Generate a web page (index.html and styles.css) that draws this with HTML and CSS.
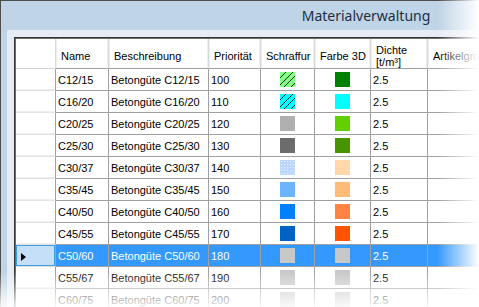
FILE: index.html
```html
<!DOCTYPE html>
<html lang="de">
<head>
    <meta charset="UTF-8">
    <title>Materialverwaltung</title>
    <link rel="stylesheet" href="styles.css">
</head>
<body>
    <div class="window">
        <div class="titlebar">Materialverwaltung</div>
        <div class="client">
            <div class="grid">
                <table>
                    <thead>
                        <tr>
                            <th class="corner"></th>
                            <th class="col-name">Name</th>
                            <th class="col-desc">Beschreibung</th>
                            <th class="col-prio">Priorität</th>
                            <th class="col-hatch">Schraffur</th>
                            <th class="col-color">Farbe 3D</th>
                            <th class="col-dens two">Dichte<br>[t/m³]</th>
                            <th class="col-group">Artikelgruppe</th>
                        </tr>
                    </thead>
                    <tbody>
                        <tr>
                            <td class="rh"></td><td>C12/15</td><td>Betongüte C12/15</td><td>100</td>
                            <td class="c"><span class="sw hatch h-green"></span></td>
                            <td class="c"><span class="sw f1"></span></td>
                            <td>2.5</td><td></td>
                        </tr>
                        <tr>
                            <td class="rh"></td><td>C16/20</td><td>Betongüte C16/20</td><td>110</td>
                            <td class="c"><span class="sw hatch h-cyan"></span></td>
                            <td class="c"><span class="sw f2"></span></td>
                            <td>2.5</td><td></td>
                        </tr>
                        <tr>
                            <td class="rh"></td><td>C20/25</td><td>Betongüte C20/25</td><td>120</td>
                            <td class="c"><span class="sw s3"></span></td>
                            <td class="c"><span class="sw f3"></span></td>
                            <td>2.5</td><td></td>
                        </tr>
                        <tr>
                            <td class="rh"></td><td>C25/30</td><td>Betongüte C25/30</td><td>130</td>
                            <td class="c"><span class="sw s4 dots"></span></td>
                            <td class="c"><span class="sw f4"></span></td>
                            <td>2.5</td><td></td>
                        </tr>
                        <tr>
                            <td class="rh"></td><td>C30/37</td><td>Betongüte C30/37</td><td>140</td>
                            <td class="c"><span class="sw s5 dots-light"></span></td>
                            <td class="c"><span class="sw f5"></span></td>
                            <td>2.5</td><td></td>
                        </tr>
                        <tr>
                            <td class="rh"></td><td>C35/45</td><td>Betongüte C35/45</td><td>150</td>
                            <td class="c"><span class="sw s6"></span></td>
                            <td class="c"><span class="sw f6"></span></td>
                            <td>2.5</td><td></td>
                        </tr>
                        <tr>
                            <td class="rh"></td><td>C40/50</td><td>Betongüte C40/50</td><td>160</td>
                            <td class="c"><span class="sw s7"></span></td>
                            <td class="c"><span class="sw f7"></span></td>
                            <td>2.5</td><td></td>
                        </tr>
                        <tr>
                            <td class="rh"></td><td>C45/55</td><td>Betongüte C45/55</td><td>170</td>
                            <td class="c"><span class="sw s8"></span></td>
                            <td class="c"><span class="sw f8"></span></td>
                            <td>2.5</td><td></td>
                        </tr>
                        <tr class="sel">
                            <td class="rh"><span class="arrow"></span></td><td>C50/60</td><td>Betongüte C50/60</td><td>180</td>
                            <td class="c"><span class="sw grey"></span></td>
                            <td class="c"><span class="sw grey"></span></td>
                            <td>2.5</td><td></td>
                        </tr>
                        <tr>
                            <td class="rh"></td><td>C55/67</td><td>Betongüte C55/67</td><td>190</td>
                            <td class="c"><span class="sw grey"></span></td>
                            <td class="c"><span class="sw grey"></span></td>
                            <td>2.5</td><td></td>
                        </tr>
                        <tr>
                            <td class="rh"></td><td>C60/75</td><td>Betongüte C60/75</td><td>200</td>
                            <td class="c"><span class="sw grey"></span></td>
                            <td class="c"><span class="sw grey"></span></td>
                            <td>2.5</td><td></td>
                        </tr>
                    </tbody>
                </table>
            </div>
        </div>
    </div>

    <div class="fade fade-right"></div>
    <div class="fade fade-bottom"></div>
</body>
</html>
```

FILE: styles.css
```css
body {
    margin: 0;
    background: #fff;
    overflow: hidden;
    font-family: "Liberation Sans", Arial, sans-serif;
    font-size: 11px;
    color: #000;
}

.window {
    width: 730px;
    border-top: 1px solid #4d4d4d;
    border-left: 1px solid #4d4d4d;
    background: #bfd4e6;
}
.titlebar {
    height: 29px;
    line-height: 29px;
    text-align: center;
    font-family: "Noto Sans", "Open Sans", sans-serif;
    font-size: 14px;
    color: #1c2f45;
}
.client {
    margin-left: 6px;
    padding: 7px 0 0 7px;
    background: #e5ecf5;
    height: 400px;
}
.grid {
    width: fit-content;
    border: 1px solid #333;
    padding: 1px;
    background: #6d6d6d;
}

table {
    border-collapse: separate;
    border-spacing: 0;
    table-layout: fixed;
    width: 532px;
    background: #fff;
}
th, td {
    box-sizing: border-box;
    padding: 0 0 0 2px;
    overflow: hidden;
    white-space: nowrap;
    text-align: left;
    font-weight: normal;
}

thead th {
    height: 30px;
    padding: 4px 2px 0 5px;
    vertical-align: middle;
    background: #fff;
    border-right: 1px solid #d8d8d8;
    border-bottom: 1px solid #a0a0a0;
    box-shadow: inset 1px 0 #eee, inset -1px 0 #eee;
}
thead th.corner {
    width: 40px;
    border-bottom-color: #d4d4d4;
    box-shadow: none;
}
th.two {
    line-height: 12px;
}
.col-name { width: 53px; }
.col-desc { width: 100px; }
.col-prio { width: 52px; }
.col-hatch { width: 54px; }
.col-color { width: 56px; }
.col-dens { width: 57px; }
.col-group { width: 120px; }

tbody td {
    height: 22px;
    vertical-align: middle;
    border-right: 1px solid #a0a0a0;
    border-bottom: 1px solid #a0a0a0;
}
tbody td.rh {
    background: #fff;
    border-bottom-color: #e2e2e2;
    box-shadow: inset 0 -1px #efefef;
}
td.c {
    padding: 0;
}

.sel td {
    background: #3399ff;
    color: #fff;
}
.sel td.rh {
    background: #c4dff7;
    box-shadow: inset 0 0 0 1px #3d9fe0;
}
.arrow {
    display: inline-block;
    vertical-align: middle;
    margin-left: 3px;
    border-left: 5px solid #000;
    border-top: 4.5px solid transparent;
    border-bottom: 4.5px solid transparent;
}

/* swatches */
.sw {
    display: block;
    width: 15px;
    height: 15px;
    margin: 0 auto;
}
.hatch.h-green {
    background: repeating-linear-gradient(135deg, #80ff80 0 4px, #222 4px 4.7px);
}
.hatch.h-cyan {
    background: repeating-linear-gradient(135deg, #00ffff 0 4px, #222 4px 4.7px);
}
.s3 { background: #b0b0b0; }
.s4 { background-color: #6c6c6c; }
.s5 { background-color: #bcd6fc; }
.s6 { background: #6cb4ff; }
.s7 { background: #0080ff; }
.s8 { background: #0062c4; }
.dots {
    background-image: radial-gradient(#848484 0.6px, transparent 0.7px);
    background-size: 4px 4px;
}
.dots-light {
    background-image: radial-gradient(#e4efff 0.6px, transparent 0.7px);
    background-size: 3px 3px;
}
.f1 { background: #008000; }
.f2 { background: #00ffff; }
.f3 { background: #62d000; }
.f4 { background: #489400; }
.f5 { background: #ffd7a8; }
.f6 { background: #ffbc78; }
.f7 { background: #ff8444; }
.f8 { background: #ff5500; }
.grey { background: #c8c8c8; }

/* screenshot fade at the edges */
.fade {
    position: fixed;
    pointer-events: none;
}
.fade-right {
    top: 0;
    right: 0;
    width: 42px;
    height: 100%;
    background: linear-gradient(to right, rgba(255, 255, 255, 0), #fff);
}
.fade-bottom {
    left: 0;
    bottom: 0;
    width: 100%;
    height: 36px;
    background: linear-gradient(to bottom, rgba(255, 255, 255, 0), rgba(255, 255, 255, 0.9));
}
```
